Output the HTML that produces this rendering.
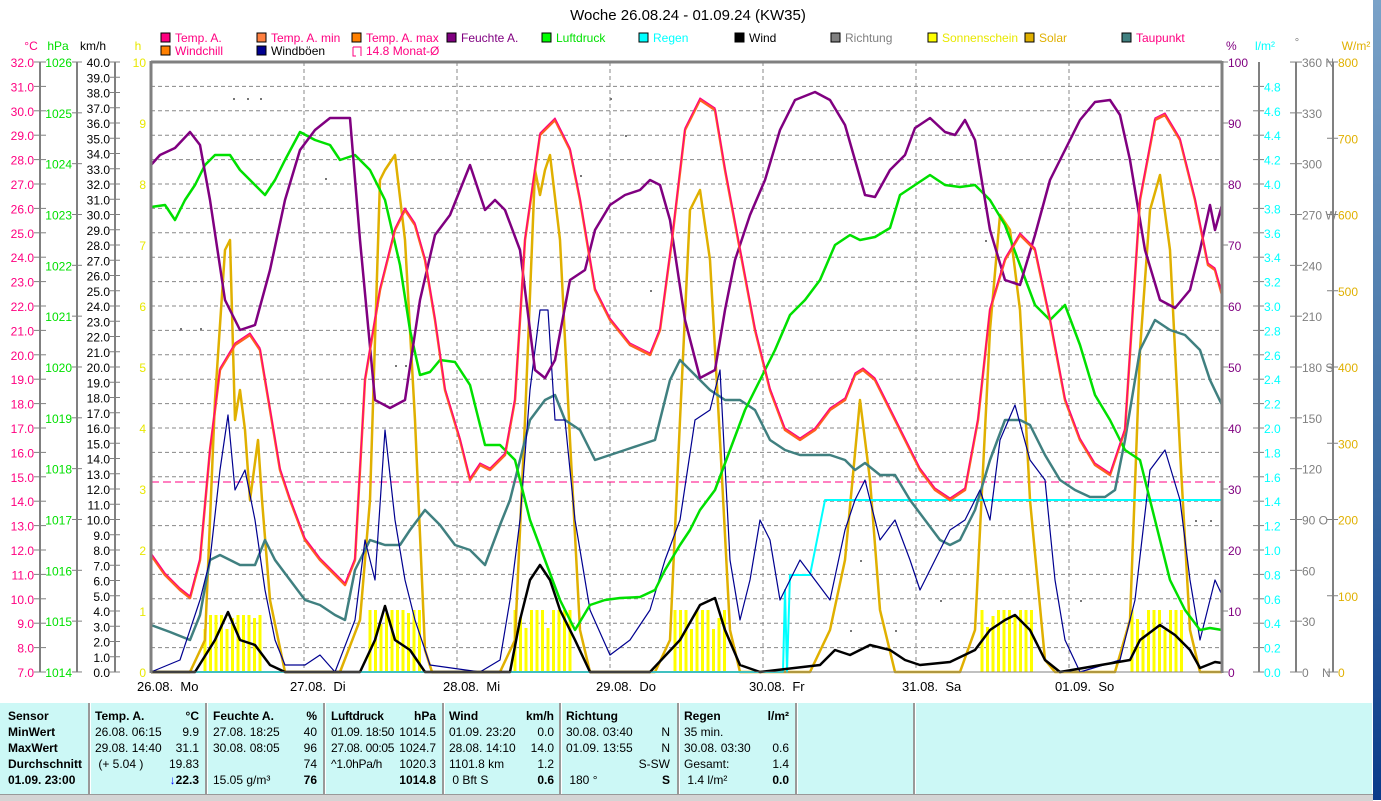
<!DOCTYPE html>
<html><head><meta charset="utf-8">
<style>
html,body{margin:0;padding:0;width:1381px;height:800px;overflow:hidden;background:#fff;font-family:"Liberation Sans",sans-serif;}
#strip{position:absolute;left:1373px;top:0;width:8px;height:800px;background:linear-gradient(#7aa2c8,#3a6aa0 60%,#0a3a8a);}
#panel{position:absolute;left:0;top:703px;width:1372px;height:91px;background:#ccf8f6;}
#bar{position:absolute;left:0;top:794px;width:1373px;height:6px;background:#d4d4d4;border-top:1px solid #999;}
.col{position:absolute;top:708px;font-size:12px;line-height:16px;color:#000;}
.sep{position:absolute;top:703px;width:2px;height:91px;background:#999;border-right:1px solid #fff;}
.b{font-weight:bold}
</style></head><body>
<svg id="s" width="1381" height="800" style="position:absolute;left:0;top:0" font-family="Liberation Sans, sans-serif"></svg>
<div id="strip"></div>
<div id="panel"></div>
<div id="bar"></div>
<div class="sep" style="left:88px"></div><div class="sep" style="left:205px"></div><div class="sep" style="left:323px"></div><div class="sep" style="left:442px"></div><div class="sep" style="left:559px"></div><div class="sep" style="left:677px"></div><div class="sep" style="left:795px"></div><div class="sep" style="left:913px"></div>
<div class="col b" style="left:8px">Sensor<br>MinWert<br>MaxWert<br>Durchschnitt<br>01.09. 23:00</div>
<div class="col" style="left:95px;width:104px"><b>Temp. A.</b><br>26.08. 06:15<br>29.08. 14:40<br>&nbsp;(+ 5.04 )<br>&nbsp;</div>
<div class="col" style="left:150px;width:49px;text-align:right"><b>°C</b><br>9.9<br>31.1<br>19.83<br><b><span style="color:#00f">↓</span>22.3</b></div>
<div class="col" style="left:213px"><b>Feuchte A.</b><br>27.08. 18:25<br>30.08. 08:05<br>&nbsp;<br>15.05 g/m³</div>
<div class="col" style="left:280px;width:37px;text-align:right"><b>%</b><br>40<br>96<br>74<br><b>76</b></div>
<div class="col" style="left:331px;letter-spacing:-0.3px"><b>Luftdruck</b><br>01.09. 18:50<br>27.08. 00:05<br>^1.0hPa/h<br>&nbsp;</div>
<div class="col" style="left:390px;width:46px;text-align:right"><b>hPa</b><br>1014.5<br>1024.7<br>1020.3<br><b>1014.8</b></div>
<div class="col" style="left:449px"><b>Wind</b><br>01.09. 23:20<br>28.08. 14:10<br>1101.8 km<br>&nbsp;0 Bft S</div>
<div class="col" style="left:510px;width:44px;text-align:right"><b>km/h</b><br>0.0<br>14.0<br>1.2<br><b>0.6</b></div>
<div class="col" style="left:566px"><b>Richtung</b><br>30.08. 03:40<br>01.09. 13:55<br>&nbsp;<br>&nbsp;180 °</div>
<div class="col" style="left:620px;width:50px;text-align:right">&nbsp;<br>N<br>N<br>S-SW<br><b>S</b></div>
<div class="col" style="left:684px"><b>Regen</b><br>35 min.<br>30.08. 03:30<br>Gesamt:<br>&nbsp;1.4 l/m²</div>
<div class="col" style="left:740px;width:49px;text-align:right"><b>l/m²</b><br>&nbsp;<br>0.6<br>1.4<br><b>0.0</b></div>
<script>
const S=document.getElementById('s');let h='';
const L=151,R=1222,T=62,B=672;
function t(x,y,s,c,a,fs){h+=`<text x="${x}" y="${y}" fill="${c}" font-size="${fs||12}" text-anchor="${a||'start'}">${s}</text>`;}
function ln(x1,y1,x2,y2,c,w,d){h+=`<line x1="${x1}" y1="${y1}" x2="${x2}" y2="${y2}" stroke="${c}" stroke-width="${w||1}" ${d?'stroke-dasharray="'+d+'"':''}/>`;}
for(let i=1;i<25;i++){let y=T+i*24.4;ln(L,y,R,y,'#888',1,'4,3');}
for(let d=1;d<7;d++){let x=L+d*153;ln(x,T,x,B,'#888',1,'4,3');}
[[233,98],[247,98],[260,98],[610,98],[625,135],[325,178],[580,175],[985,240],[1000,270],[395,365],[405,365],[860,560],[895,630],[940,600],[1210,520],[1195,520],[1080,600],[850,630],[650,290],[180,328],[200,328]].forEach(p=>h+=`<rect x="${p[0]}" y="${p[1]}" width="2" height="2" fill="#777"/>`);
ln(L,482,R,482,'#ff0080',1,'8,4');
[[205,265,615],[370,420,610],[515,575,610],[675,725,610],[982,1035,610],[1132,1185,610]].forEach(g=>{for(let x=g[0];x<=g[1];x+=5.5){let top=g[2]+((x*37)%30>20?(x%11)*2:0);ln(x,top,x,B,'#ffff00',3);}});
function pl(pts,c,w){h+=`<polyline fill="none" stroke="${c}" stroke-width="${w}" stroke-linejoin="round" points="${pts.map(p=>p.join(',')).join(' ')}"/>`;}
pl([[151,672],[190,672],[205,640],[215,400],[225,250],[230,240],[235,420],[240,390],[245,430],[250,500],[258,440],[262,500],[270,600],[285,672],[340,672],[360,620],[370,500],[380,180],[385,170],[395,155],[405,240],[415,420],[425,650],[432,672],[500,672],[515,640],[525,420],[535,170],[540,195],[545,170],[550,155],[560,240],[570,440],[580,630],[590,672],[655,672],[670,640],[680,420],[690,210],[700,190],[710,260],[720,440],[730,630],[740,672],[810,672],[830,630],[845,560],[860,400],[870,480],[880,610],[895,672],[960,672],[975,630],[990,330],[1000,215],[1010,230],[1020,310],[1030,500],[1045,660],[1055,672],[1115,672],[1130,620],[1140,350],[1150,210],[1160,175],[1170,250],[1180,450],[1190,630],[1200,672],[1222,672]],'#e0b000',2.5);
pl([[151,672],[783,672],[785,590],[787,672],[790,575],[810,575],[825,500],[1222,500]],'#00ffff',2);
pl([[151,625],[170,632],[190,640],[200,615],[210,560],[220,555],[240,565],[255,565],[265,540],[275,560],[290,580],[305,600],[320,605],[335,615],[345,620],[355,570],[370,540],[385,545],[400,545],[410,530],[425,510],[440,525],[455,545],[470,550],[485,565],[500,525],[510,500],[520,460],[530,420],[545,400],[555,395],[565,420],[580,430],[595,460],[610,455],[625,450],[640,445],[655,440],[670,380],[680,360],[695,375],[710,390],[725,400],[740,400],[755,410],[770,440],[785,450],[800,455],[815,455],[830,455],[845,460],[855,470],[865,463],[880,475],[895,475],[910,500],[925,520],[940,540],[950,545],[960,540],[975,510],[990,460],[1005,420],[1020,420],[1030,425],[1045,455],[1060,480],[1075,490],[1090,497],[1105,497],[1115,490],[1125,440],[1140,350],[1155,320],[1170,330],[1185,335],[1200,350],[1210,380],[1222,405]],'#408080',2.5);
pl([[151,672],[180,660],[200,600],[210,560],[220,470],[228,415],[235,490],[245,470],[255,520],[265,590],[275,640],[285,665],[305,665],[320,655],[335,672],[355,620],[365,540],[375,580],[385,430],[395,520],[405,580],[415,620],[430,665],[480,672],[500,660],[510,600],[520,520],[530,390],[540,310],[548,310],[555,420],[565,420],[575,520],[590,610],[610,655],[630,640],[650,610],[665,560],[680,520],[695,420],[710,410],[720,370],[730,560],[740,620],[750,580],[760,520],[770,540],[780,600],[790,580],[800,560],[815,580],[830,600],[845,530],[855,500],[865,480],[880,540],[895,520],[910,560],[920,590],[935,560],[950,530],[965,520],[980,490],[990,520],[1000,440],[1015,405],[1030,460],[1045,480],[1055,580],[1065,640],[1080,672],[1120,660],[1135,600],[1150,470],[1165,450],[1180,500],[1190,580],[1200,640],[1210,600],[1215,580],[1222,595]],'#000090',1.2);
pl([[151,672],[195,672],[215,640],[228,612],[240,640],[255,645],[270,665],[285,672],[360,672],[375,640],[385,606],[395,640],[410,650],[425,672],[510,672],[520,620],[530,580],[540,565],[550,580],[560,610],[575,640],[590,672],[650,672],[680,640],[700,605],[715,598],[725,630],[740,665],[760,672],[820,665],[835,650],[850,655],[870,645],[890,650],[905,660],[920,665],[950,662],[975,650],[990,630],[1005,620],[1015,615],[1030,630],[1045,660],[1060,672],[1130,660],[1140,640],[1160,625],[1175,635],[1190,650],[1200,668],[1215,662],[1222,663]],'#000',2.5);
pl([[151,207],[165,205],[175,220],[185,200],[195,185],[205,165],[215,155],[230,155],[240,170],[255,185],[265,195],[275,180],[285,160],[300,132],[315,140],[330,145],[340,160],[355,155],[370,170],[385,200],[400,265],[410,330],[420,375],[430,372],[440,360],[455,362],[470,385],[485,445],[500,445],[515,460],[530,520],[545,560],[560,600],[575,630],[590,605],[605,600],[620,598],[640,597],[655,590],[665,570],[680,545],[690,530],[700,510],[715,490],[730,450],[745,410],[760,380],[775,350],[790,315],[805,300],[820,280],[835,245],[850,235],[860,240],[875,237],[890,228],[900,195],[915,185],[930,175],[945,185],[960,187],[975,185],[990,200],[1005,225],[1020,265],[1035,305],[1050,320],[1065,305],[1080,345],[1095,395],[1110,420],[1125,450],[1140,460],[1155,520],[1170,580],[1185,610],[1200,630],[1210,628],[1222,630]],'#00e000',2.5);
pl([[151,165],[160,155],[175,148],[190,132],[200,145],[210,200],[225,300],[240,330],[255,325],[270,270],[285,200],[300,150],[315,130],[330,118],[350,118],[360,240],[375,400],[390,408],[405,400],[420,300],[435,235],[450,215],[470,165],[485,210],[495,200],[505,210],[520,250],[535,370],[545,378],[555,360],[570,280],[585,270],[595,230],[610,205],[625,195],[640,190],[650,180],[660,185],[670,220],[685,320],[700,378],[715,370],[725,310],[735,260],[750,215],[765,180],[780,130],[795,100],[815,92],[830,100],[845,125],[855,160],[865,195],[875,197],[890,170],[905,155],[915,128],[930,118],[945,132],[955,135],[965,120],[975,140],[990,230],[1005,280],[1020,285],[1035,235],[1050,180],[1065,150],[1080,120],[1095,102],[1110,100],[1120,115],[1130,160],[1145,250],[1160,300],[1175,308],[1190,290],[1200,250],[1210,205],[1215,230],[1222,205]],'#800080',2.5);
const tp=[[151,555],[165,575],[180,590],[190,598],[200,560],[210,450],[220,370],[235,345],[250,335],[260,350],[270,410],[280,470],[290,500],[305,540],[320,560],[335,575],[345,585],[355,560],[365,380],[380,290],[395,230],[405,210],[415,225],[425,260],[435,320],[445,390],[460,440],[470,480],[480,465],[490,470],[505,455],[515,400],[525,240],[540,135],[555,120],[570,150],[580,200],[595,290],[610,320],[630,345],[650,355],[660,330],[672,240],[685,130],[700,100],[715,110],[725,170],[740,250],[755,330],[770,390],[785,430],[800,440],[815,430],[830,410],[845,400],[855,375],[863,370],[875,380],[890,410],[905,440],[920,470],[935,490],[950,500],[965,490],[978,420],[990,310],[1005,260],[1020,235],[1035,250],[1050,320],[1065,400],[1080,440],[1095,465],[1110,475],[1125,430],[1140,200],[1155,120],[1165,115],[1180,140],[1195,200],[1208,265],[1215,270],[1222,295]];
pl(tp,'#ff6020',2.5);pl(tp.map(p=>[p[0],p[1]-2]),'#ff0080',1.2);
ln(L,T,R,T,'#808080',3);ln(L,T-1,L,B+1,'#808080',3);ln(R,T-1,R,B+1,'#808080',3);ln(L,B,R,B,'#808080',1);
ln(40,T,40,B,'#808080',2);ln(77,T,77,B,'#808080',2);ln(115,T,115,B,'#808080',2);
for(let i=0;i<=25;i++){let y=T+i*24.4;ln(34,y,46,y,'#808080');t(34,y+5,(32-i).toFixed(1),'#ff0080','end',12);}
for(let i=0;i<=12;i++){let y=T+i*50.83;ln(72,y,82,y,'#808080');t(72,y+5,1026-i,'#00e000','end',12);}
for(let i=0;i<=40;i++){let y=T+i*15.25;ln(110,y,120,y,'#808080');t(110,y+5,(40-i).toFixed(1),'#000','end',12);}
for(let i=0;i<=10;i++){let y=T+i*61;t(146,y+5,10-i,'#e8e800','end',12);}
t(31,50,'°C','#ff0080','middle',12);t(58,50,'hPa','#00e000','middle',12);t(93,50,'km/h','#000','middle',12);t(138,50,'h','#e8e800','middle',12);
for(let i=0;i<=10;i++){let y=T+i*61;ln(R,y,R+6,y,'#808080');t(R+6,y+5,100-i*10,'#800080','start',12);}
ln(1259,T,1259,B,'#808080',2);
for(let i=0;i<=24;i++){let y=B-i*24.4;if(y<80)break;ln(1253,y,1264,y,'#808080');t(1264,y+5,(i*0.2).toFixed(1),'#00ffff','start',12);}
ln(1296,T,1296,B,'#808080',2);
for(let i=0;i<=12;i++){let y=B-i*50.83;ln(1290,y,1302,y,'#808080');let lab=i*30+({0:'&#160;&#160;&#160;&#160;N',3:' O',6:' S',9:' W',12:' N'}[i]||'');t(1302,y+5,lab,'#808080','start',12);}
ln(1333,T,1333,B,'#808080',2);
for(let i=0;i<=8;i++){let y=B-i*76.25;ln(1327,y,1338,y,'#808080');t(1338,y+5,i*100,'#e0b000','start',12);}
t(1226,50,'%','#800080','start',12);t(1265,50,'l/m²','#00ffff','middle',12);t(1297,46,'°','#808080','middle',11);t(1356,50,'W/m²','#e0b000','middle',12);
['26.08.  Mo','27.08.  Di','28.08.  Mi','29.08.  Do','30.08.  Fr','31.08.  Sa','01.09.  So'].forEach((s,i)=>h+=`<text x="${137+i*153}" y="691" font-size="13" xml:space="preserve">${s}</text>`);
t(688,20,'Woche 26.08.24 - 01.09.24 (KW35)','#000','middle',15);
const lg=[[161,'#ff0080','Temp. A.','#ff0080'],[257,'#ff8040','Temp. A. min','#ff0080'],[352,'#ff8000','Temp. A. max','#ff0080'],[447,'#800080','Feuchte A.','#800080'],[542,'#00ff00','Luftdruck','#00e000'],[639,'#00ffff','Regen','#00ffff'],[735,'#000','Wind','#000'],[831,'#808080','Richtung','#808080'],[928,'#ffff00','Sonnenschein','#e8e800'],[1025,'#e0b000','Solar','#e0b000'],[1122,'#408080','Taupunkt','#ff0080']];
lg.forEach(a=>{h+=`<rect x="${a[0]}" y="33" width="9" height="9" fill="${a[1]}" stroke="#000"/>`;t(a[0]+14,42,a[2],a[3],'start',12);});
[[161,'#ff8000','Windchill','#ff0080'],[257,'#000090','Windböen','#000']].forEach(a=>{h+=`<rect x="${a[0]}" y="46" width="9" height="9" fill="${a[1]}" stroke="#000"/>`;t(a[0]+14,55,a[2],a[3],'start',12);});
h+=`<path d="M353,47 H361 V56 M353,47 V56 H356" fill="none" stroke="#ff0080"/>`;t(366,55,'14.8 Monat-Ø','#ff0080','start',12);
S.innerHTML=h;
</script>
</body></html>
